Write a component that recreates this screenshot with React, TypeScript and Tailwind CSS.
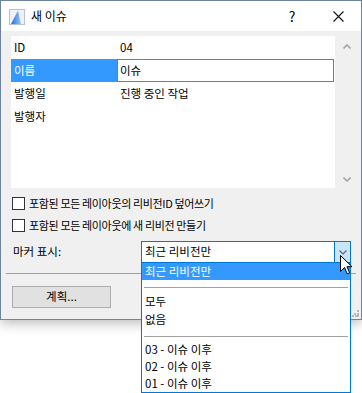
import React from 'react';

const rows = [
  { label: 'ID', value: '04' },
  { label: '이름', value: '이슈', selected: true },
  { label: '발행일', value: '진행 중인 작업' },
  { label: '발행자', value: '' },
];

const options = ['03 - 이슈 이후', '02 - 이슈 이후', '01 - 이슈 이후'];

function AppIcon() {
  return (
    <svg width="16" height="16" viewBox="0 0 16 16">
      <defs>
        <linearGradient id="ai" x1="0" y1="0" x2="1" y2="0">
          <stop offset="0" stopColor="#1f6fe0" />
          <stop offset="1" stopColor="#9cc8f5" />
        </linearGradient>
      </defs>
      <rect x="0.5" y="0.5" width="15" height="15" fill="#eef2f8" stroke="#b8c2d0" />
      <path d="M2 15 L9 1.5 L12 15 Z" fill="url(#ai)" />
    </svg>
  );
}

function Checkbox({ label }: { label: string }) {
  return (
    <div className="flex h-[22px] items-center pl-[11px]">
      <div className="h-[13px] w-[13px] border border-[#333333] bg-white" />
      <span className="ml-[4px] text-[11px] leading-none tracking-[-0.35px]">{label}</span>
    </div>
  );
}

export default function App() {
  return (
    <div className="relative h-[393px] w-[362px] overflow-hidden bg-white font-['Noto_Sans_CJK_KR','Noto_Sans',sans-serif] text-[11.5px] text-black">
      {/* dialog window */}
      <div className="relative flex h-[320px] w-[362px] flex-col border border-[#6d84a0] bg-[#f0f0f0] shadow-[0_3px_12px_rgba(0,0,0,0.28)]">
        <div className="flex h-[30px] items-center bg-white">
          <div className="ml-[8px] mt-[1px]">
            <AppIcon />
          </div>
          <span className="ml-[6px] text-[12px] leading-none">새 이슈</span>
          <div className="flex-1" />
          <div className="flex h-full w-[46px] items-center justify-center text-[14px]">?</div>
          <div className="flex h-full w-[46px] items-center justify-center">
            <svg width="11" height="11" viewBox="0 0 11 11">
              <path d="M0.5 0.5 L10.5 10.5 M10.5 0.5 L0.5 10.5" stroke="#111" strokeWidth="1.1" />
            </svg>
          </div>
        </div>

        <div className="flex flex-1 flex-col">
          <div className="ml-[10px] mt-[5px] flex">
            <div className="h-[152px] w-[324px] bg-white">
              {rows.map((r) => (
                <div key={r.label} className="flex h-[23px] items-center">
                  <div
                    className={
                      r.selected
                        ? 'flex h-full w-[106px] items-center bg-[#3399ff] pl-[3px] text-white'
                        : 'flex h-full w-[106px] items-center pl-[3px]'
                    }
                  >
                    {r.label}
                  </div>
                  {r.selected ? (
                    <div className="mr-[1px] flex h-full flex-1 items-center border border-[#7a7a7a] bg-white pl-[2px]">
                      {r.value}
                    </div>
                  ) : (
                    <div className="flex h-full flex-1 items-center pl-[3px]">{r.value}</div>
                  )}
                </div>
              ))}
            </div>
            <div className="flex w-[23px] flex-col items-center justify-between pb-[6px] pt-[8px]">
              <svg width="8" height="5" viewBox="0 0 8 5">
                <path d="M0.5 4.5 L4 1 L7.5 4.5" stroke="#a6a6a6" strokeWidth="1.6" fill="none" />
              </svg>
              <svg width="8" height="5" viewBox="0 0 8 5">
                <path d="M0.5 0.5 L4 4 L7.5 0.5" stroke="#a6a6a6" strokeWidth="1.6" fill="none" />
              </svg>
            </div>
          </div>

          <div className="mt-[4px]">
            <Checkbox label="포함된 모든 레이아웃의 리비전ID 덮어쓰기" />
            <Checkbox label="포함된 모든 레이아웃에 새 리비전 만들기" />
          </div>

          <div className="mt-[5px] flex h-[22px] items-center">
            <span className="w-[140px] pl-[12px] leading-none">마커 표시:</span>
            <div className="flex h-[22px] w-[210px] border border-[#0078d7] bg-white">
              <span className="flex flex-1 items-center pl-[3px]">최근 리비전만</span>
              <div className="flex w-[16px] items-center justify-center border-l border-[#0078d7] bg-[#cce4f7]">
                <svg width="8" height="5" viewBox="0 0 8 5">
                  <path d="M0.5 0.5 L4 4 L7.5 0.5" stroke="#5a6b80" strokeWidth="1.2" fill="none" />
                </svg>
              </div>
            </div>
          </div>

          <div className="mx-[5px] mt-[10px] h-px bg-[#a0a0a0]" />

          <div className="ml-[11px] mt-[12px] flex h-[22px] w-[99px] items-center justify-center border border-[#adadad] bg-[#e1e1e1]">
            계획...
          </div>
        </div>

        {/* resize grip */}
        <svg className="absolute bottom-[2px] right-[2px]" width="7" height="7" viewBox="0 0 7 7">
          <rect x="5" y="0" width="2" height="2" fill="#b8b8b8" />
          <rect x="2" y="3" width="2" height="2" fill="#b8b8b8" />
          <rect x="5" y="3" width="2" height="2" fill="#b8b8b8" />
          <rect x="0" y="5" width="2" height="2" fill="#b8b8b8" />
          <rect x="3" y="5" width="2" height="2" fill="#b8b8b8" />
          <rect x="5" y="5" width="2" height="2" fill="#b8b8b8" />
        </svg>
      </div>

      {/* open dropdown list */}
      <div className="absolute left-[141px] top-[262px] flex h-[131px] w-[210px] flex-col border border-[#0078d7] bg-white">
        <div className="flex h-[17px] items-center bg-[#3399ff] pl-[3px] text-white">최근 리비전만</div>
        <div className="mx-[2px] mt-[7px] h-px bg-[#a0a0a0]" />
        <div className="mt-[5px] flex h-[18px] items-center pl-[3px]">모두</div>
        <div className="flex h-[18px] items-center pl-[3px]">없음</div>
        <div className="mx-[2px] mt-[8px] h-px bg-[#a0a0a0]" />
        <div className="mt-[4px] flex flex-col">
          {options.map((o) => (
            <div key={o} className="flex h-[17px] items-center pl-[3px]">
              {o}
            </div>
          ))}
        </div>
      </div>

      {/* mouse pointer */}
      <svg className="absolute left-[340px] top-[255px]" width="13" height="20" viewBox="0 0 13 20">
        <path
          d="M0.5 0.5 L0.5 16.5 L4.5 12.5 L7.2 18.8 L9.6 17.8 L7 11.7 L12 11.7 Z"
          fill="#fff"
          stroke="#000"
          strokeWidth="1"
          strokeLinejoin="miter"
        />
      </svg>
    </div>
  );
}
